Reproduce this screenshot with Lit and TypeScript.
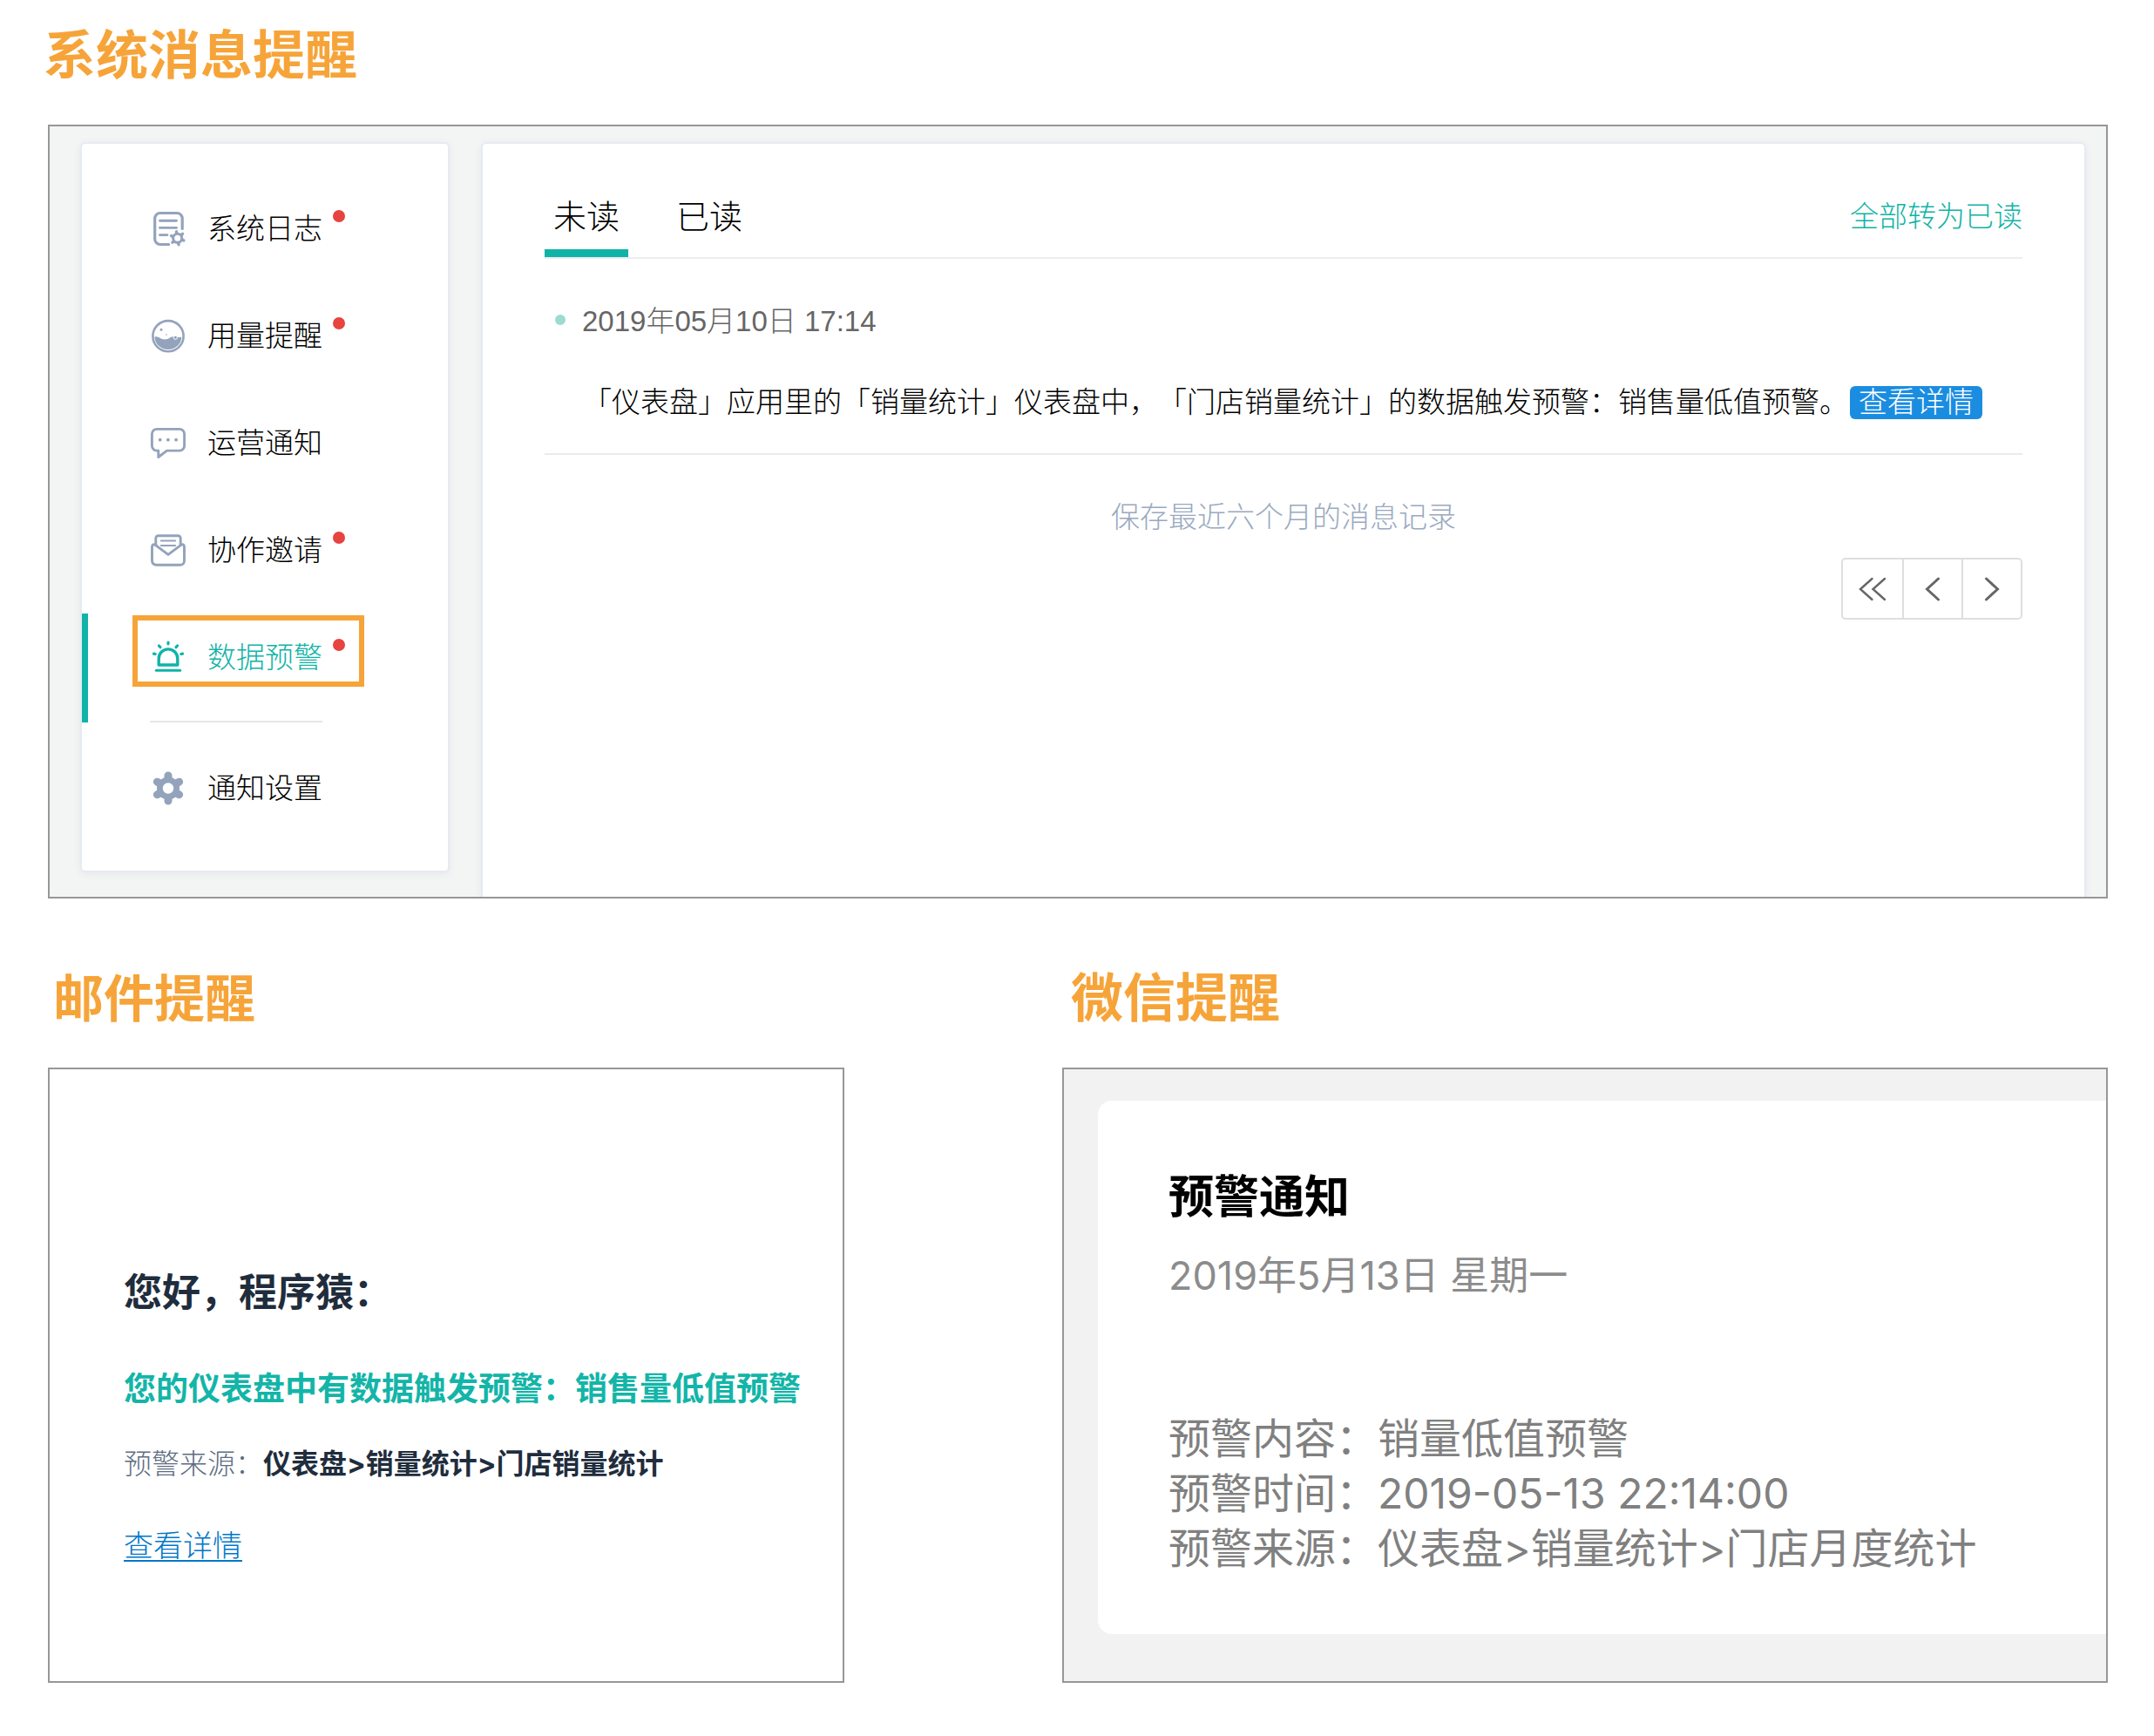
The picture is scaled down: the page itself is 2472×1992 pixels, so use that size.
import { LitElement, html, css, svg, nothing, TemplateResult } from "lit";
import { customElement, property, state } from "lit/decorators.js";

type IconName = "log" | "usage" | "chat" | "mail" | "alarm" | "gear";

const spokes = (cx: number, cy: number, r: number, start: number) =>
  [0, 1, 2, 3, 4, 5]
    .map((i) => {
      const a = ((start + i * 60) * Math.PI) / 180;
      return `M${cx} ${cy}L${(cx + r * Math.cos(a)).toFixed(2)} ${(cy + r * Math.sin(a)).toFixed(2)}`;
    })
    .join("");

const icons: Record<IconName, TemplateResult> = {
  log: svg`
    <path d="M36.2 19.5V7.5a6 6 0 0 0-6-6h-19.500a6 6 0 0 0-6 6v24a6 6 0 0 0 6 6h10" fill="none" stroke="currentColor" stroke-width="3.200" stroke-linecap="round"/>
    <path d="M10.500 10.300h19M10.500 18.400h19M10.500 26.600h8.500" fill="none" stroke="currentColor" stroke-width="2.900" stroke-linecap="round"/>
    <circle cx="30.700" cy="30.300" r="6.500" fill="currentColor"/>
    <path d="${spokes(30.7, 30.3, 7.6, 20)}" stroke="currentColor" stroke-width="3.400" stroke-linecap="round"/>
    <circle cx="30.700" cy="30.300" r="3.500" fill="#fff"/>`,
  usage: svg`
    <circle cx="20" cy="19.700" r="17.600" fill="none" stroke="currentColor" stroke-width="2.600"/>
    <path d="M4.500 20.500C9 19.500 11 23.500 16 23.500S22 20.500 26 20.300C29 20.200 32 22 35.300 20.500A15.400 14.600 0 0 1 4.500 20.500Z" fill="currentColor"/>
    <circle cx="28.300" cy="21.300" r="2.100" fill="currentColor" stroke="#fff" stroke-width="1"/>
    <circle cx="12" cy="12.300" r="1.500" fill="currentColor"/>
    <circle cx="18" cy="18" r=".8" fill="currentColor"/>`,
  chat: svg`
    <path d="M7 3.400h26a5.600 5.600 0 0 1 5.600 5.600v13.500a5.600 5.600 0 0 1-5.600 5.600H18.500L8.800 35.500V28.100H7A5.600 5.600 0 0 1 1.400 22.500V9A5.600 5.600 0 0 1 7 3.400Z" fill="none" stroke="currentColor" stroke-width="2.900" stroke-linejoin="round"/>
    <circle cx="10.700" cy="15.700" r="1.900" fill="currentColor"/>
    <circle cx="19.900" cy="15.700" r="1.900" fill="currentColor"/>
    <circle cx="29.100" cy="15.700" r="1.900" fill="currentColor"/>`,
  mail: svg`
    <path d="M5.800 15V5.500A2.800 2.800 0 0 1 8.600 2.700H31.400a2.800 2.800 0 0 1 2.800 2.800V15" fill="none" stroke="currentColor" stroke-width="2.900"/>
    <path d="M5 13.200C2.600 12.200 1.500 13.200 1.500 15.500V31.500a4.800 4.800 0 0 0 4.800 4.800H33.700a4.800 4.800 0 0 0 4.800-4.800V15.500C38.500 13.200 37.400 12.200 35 13.200L20 24.400Z" fill="none" stroke="currentColor" stroke-width="2.900" stroke-linejoin="round"/>
    <path d="M11.800 8.400h16.400M11.800 14h16.400" stroke="currentColor" stroke-width="2" stroke-linecap="round"/>`,
  alarm: svg`
    <path d="M9.200 28V20.700a10.800 10.800 0 0 1 21.600 0V28z" fill="none" stroke="currentColor" stroke-width="3.400" stroke-linejoin="round"/>
    <path d="M6.300 34.300H33.700" stroke="currentColor" stroke-width="3" stroke-linecap="round"/>
    <path d="M20 2.200V3.800M9.400 6l1.600 1.700M30.600 6L29 7.700M3.500 15.200l1.700.3M36.500 15.200l-1.700.3" stroke="currentColor" stroke-width="3.200" stroke-linecap="round"/>`,
  gear: svg`
    <circle cx="20" cy="19.500" r="13" fill="currentColor"/>
    <path d="${spokes(20, 19.5, 14.6, 30)}" stroke="currentColor" stroke-width="9" stroke-linecap="round"/>
    <circle cx="20" cy="19.500" r="6.200" fill="#fff"/>`,
};

@customElement("app-icon")
class AppIcon extends LitElement {
  static styles = css`
    :host { display: block; flex: none; width: 40px; height: 40px; }
    .icon { display: block; width: 100%; height: 100%; overflow: visible; }
  `;
  @property() name: IconName = "log";
  render() {
    return html`<svg class="icon" viewBox="0 0 40 40" aria-hidden="true">${icons[this.name]}</svg>`;
  }
}

interface NavItem { icon: IconName; label: string; unread: boolean; }

const navItems: NavItem[] = [
  { icon: "log", label: "系统日志", unread: true },
  { icon: "usage", label: "用量提醒", unread: true },
  { icon: "chat", label: "运营通知", unread: false },
  { icon: "mail", label: "协作邀请", unread: true },
  { icon: "alarm", label: "数据预警", unread: true },
];

@customElement("side-nav")
class SideNav extends LitElement {
  static styles = css`
    :host { display: block; }
    .nav {
      box-sizing: border-box; padding: 47px 0 45px; background: #fff;
      border: 2px solid #e6eaf2; border-radius: 6px; box-shadow: 0 2px 8px rgba(40, 50, 80, .07);
    }
    .item {
      position: relative; display: flex; align-items: flex-start; gap: 25px;
      width: 100%; height: 123px; margin: 0; padding: 31px 0 0 79px; box-sizing: border-box;
      border: 0; background: none; color: #000; text-align: left; cursor: pointer;
      font-family: inherit; font-size: 33px; font-weight: 300; line-height: 40px;
    }
    .item.last { height: 100px; }
    .icon { color: #93a3bb; }
    .active, .active .icon { color: #10b3a7; }
    .active::before {
      content: ""; position: absolute; left: 0; top: 0; width: 7px; height: 125px; background: #10b3a7;
    }
    .label { position: relative; }
    .dot {
      position: absolute; left: 144px; top: -2px; width: 14px; height: 14px;
      border-radius: 50%; background: #e7433f;
    }
    .mark {
      position: absolute; left: 58px; top: 2px; width: 266px; height: 82px;
      box-sizing: border-box; border: 6px solid #f6a439; pointer-events: none;
    }
    .rule { height: 2px; margin: 0 144px 25px 78px; border: 0; background: #e6e6e6; }
  `;
  @state() private current = "数据预警";
  render() {
    return html`<nav class="nav">
      ${navItems.map(
        (n) => html`<button class="item ${n.label === this.current ? "active" : ""}" @click=${() => (this.current = n.label)}>
          <app-icon class="icon" name=${n.icon}></app-icon>
          <span class="label">${n.label}${n.unread ? html`<i class="dot"></i>` : nothing}</span>
          ${n.icon === "alarm" ? html`<span class="mark"></span>` : nothing}
        </button>`
      )}
      <hr class="rule" />
      <button class="item last"><app-icon class="icon" name="gear"></app-icon><span class="label">通知设置</span></button>
    </nav>`;
  }
}

@customElement("message-panel")
class MessagePanel extends LitElement {
  static styles = css`
    :host {
      display: block; box-sizing: border-box; padding: 0 71px; background: #fff; color: #000;
      border: 2px solid #e6eaf2; border-bottom: 0; border-radius: 6px 6px 0 0;
      box-shadow: 0 2px 8px rgba(40, 50, 80, .07); font-size: 33px; line-height: 44px; font-weight: 300;
    }
    button { font-family: inherit; cursor: pointer; }
    .head { display: flex; align-items: flex-end; padding-top: 47px; border-bottom: 2px solid #ededed; }
    .tabs { display: flex; flex: 1; gap: 45px; }
    .tab {
      padding: 0 10px; border: 0; border-bottom: 9px solid transparent; background: none;
      color: #000; font-size: 38px; font-weight: 300; line-height: 74px;
    }
    .tab.on { border-bottom-color: #10b3a7; }
    .all {
      padding: 0; border: 0; border-bottom: 9px solid transparent; background: none;
      color: #10b3a7; font-size: 33px; font-weight: 300; line-height: 74px;
    }
    .message { padding: 50px 0 36px; border-bottom: 2px solid #ebebeb; }
    .when { display: flex; align-items: center; gap: 19px; padding-left: 12px; color: #666; }
    .when::before { content: ""; width: 12px; height: 12px; margin-bottom: 4px; border-radius: 50%; background: #9bdbd2; }
    .text { margin: 49px 0 0 44px; }
    .detail {
      display: inline-block; margin-left: 2px; padding: 0 10px; border-radius: 6px; background: #1b8de1; color: #fff;
      line-height: 38px; text-decoration: none;
    }
    .note { margin: 50px 0 24px; color: #99a9bf; text-align: center; }
    .pager {
      display: flex; width: max-content; margin-left: auto; border: 2px solid #dedede; border-radius: 5px;
    }
    .page { display: grid; place-items: center; width: 68px; height: 67px; padding: 0; border: 0; background: none; }
    .page + .page { box-sizing: content-box; border-left: 2px solid #dedede; width: 66px; }
    .arrow { display: block; width: 32px; height: 28px; fill: none; stroke: #666; stroke-width: 2.4; stroke-linecap: round; }
    .arrow.bold { stroke-width: 3; }
  `;
  @state() private tab = 0;
  render() {
    return html`
      <div class="head">
        <div class="tabs" role="tablist">
          ${["未读", "已读"].map(
            (t, i) => html`<button class="tab ${this.tab === i ? "on" : ""}" role="tab" aria-selected=${this.tab === i} @click=${() => (this.tab = i)}>${t}</button>`
          )}
        </div>
        <button class="all">全部转为已读</button>
      </div>
      <article class="message">
        <time class="when">2019年05月10日 17:14</time>
        <p class="text">「仪表盘」应用里的「销量统计」仪表盘中，「门店销量统计」的数据触发预警：销售量低值预警。<a class="detail" href="#detail">查看详情</a></p>
      </article>
      <p class="note">保存最近六个月的消息记录</p>
      <div class="pager">
        <button class="page" aria-label="首页"><svg class="arrow" viewBox="0 0 32 28"><path d="M15.500 2L2 14l13.500 12M30 2L16.500 14L30 26"/></svg></button>
        <button class="page" aria-label="上一页"><svg class="arrow bold" viewBox="0 0 32 28"><path d="M22.500 2L9.500 14l13 12"/></svg></button>
        <button class="page" aria-label="下一页"><svg class="arrow bold" viewBox="0 0 32 28"><path d="M9.500 2l13 12l-13 12"/></svg></button>
      </div>`;
  }
}

@customElement("app-root")
class AppRoot extends LitElement {
  static styles = css`
    :host {
      display: block; box-sizing: border-box; min-height: 100vh; padding: 25px 53px 61px 55px; background: #fff;
      font-family: "Liberation Sans", "Noto Sans CJK SC", sans-serif; text-spacing-trim: space-all;
    }
    .title { margin: 0 0 38px; padding-left: 10px; color: #f6a439; font-size: 60px; font-weight: 700; line-height: 80px; }
    .frame { box-sizing: border-box; border: 2px solid #979797; overflow: hidden; }
    .system {
      display: grid; grid-template-columns: 424px minmax(0, 1fr); gap: 36px; padding: 18px 23px 0 35px; background: #f3f5f5;
    }
    .nav { margin-bottom: 28px; }
    .pair { display: grid; grid-template-columns: 914fr 1200fr; gap: 250px; margin-top: 76px; }
    .channel { display: flex; flex-direction: column; min-width: 0; }
    .channel .frame { flex: 1; }
    .first { padding-left: 0; margin-left: -5px; }
    .mail-title { padding-left: 6px; font-size: 58px; }

    .mail { padding: 227px 20px 133px 85px; color: #1f2d3d; }
    .mail p, .mail h3 { margin: 0; }
    .hello { font-size: 44px; font-weight: 700; line-height: 60px; }
    .mail .alert { margin-top: 56px; color: #13b5a8; font-size: 37px; font-weight: 700; line-height: 50px; }
    .mail .source { margin-top: 38px; color: #5e6d82; font-size: 32px; font-weight: 300; line-height: 44px; }
    .path { color: #1f2d3d; font-family: Inter, "Noto Sans CJK SC", sans-serif; font-weight: 700; }
    .mail .more { margin-top: 50px; font-size: 34px; font-weight: 300; line-height: 44px; }
    .link { color: #0077c8; text-decoration-thickness: 2px; text-underline-offset: 4px; }

    .wechat { padding: 36px 0 54px 39px; background: #f2f2f2; }
    .card {
      padding: 79px 0 67px 81px; border-radius: 16px 0 0 16px; background: #fff; color: #808080;
      font-family: Inter, "Noto Sans CJK SC", sans-serif;
    }
    .card h3, .card p { margin: 0; }
    .card h3 { color: #000; font-size: 52px; font-weight: 700; line-height: 64px; }
    .card .date { margin: 28px 0 125px; color: #8c8c8c; font-size: 45px; line-height: 60px; }
    .card .row { font-size: 48px; line-height: 63px; }
  `;
  render() {
    return html`
      <h2 class="title first">系统消息提醒</h2>
      <section class="frame system">
        <side-nav class="nav"></side-nav>
        <message-panel></message-panel>
      </section>
      <div class="pair">
        <section class="channel">
          <h2 class="title mail-title">邮件提醒</h2>
          <div class="frame mail">
            <h3 class="hello">您好，程序猿：</h3>
            <p class="alert">您的仪表盘中有数据触发预警：销售量低值预警</p>
            <p class="source">预警来源：<span class="path">仪表盘&gt;销量统计&gt;门店销量统计</span></p>
            <p class="more"><a class="link" href="#detail">查看详情</a></p>
          </div>
        </section>
        <section class="channel">
          <h2 class="title">微信提醒</h2>
          <div class="frame wechat">
            <div class="card">
              <h3>预警通知</h3>
              <p class="date">2019年5月13日 星期一</p>
              <p class="row">预警内容：销量低值预警</p>
              <p class="row">预警时间：2019-05-13 22:14:00</p>
              <p class="row">预警来源：仪表盘&gt;销量统计&gt;门店月度统计</p>
            </div>
          </div>
        </section>
      </div>`;
  }
}
